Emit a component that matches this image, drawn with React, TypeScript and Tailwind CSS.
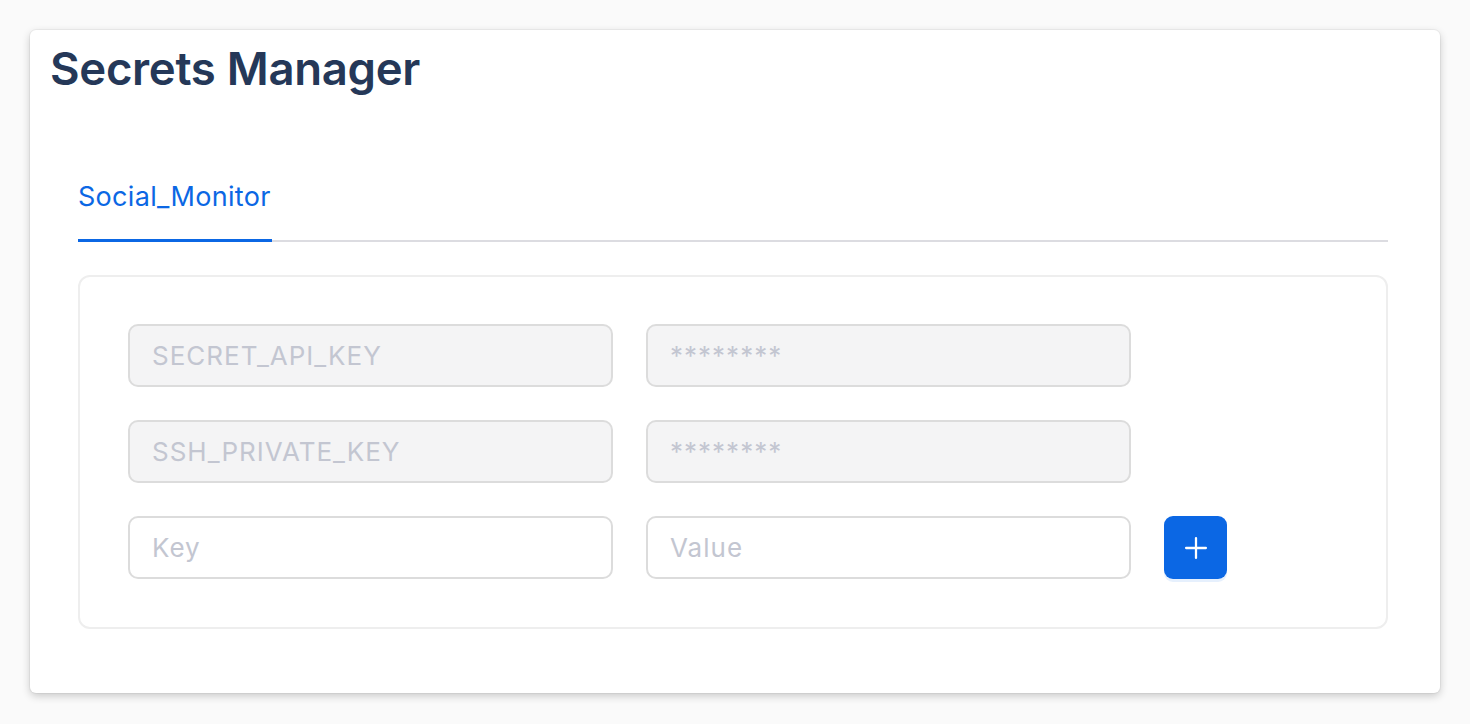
import { Plus } from "lucide-react";

const rows = [
  { key: "SECRET_API_KEY", value: "********" },
  { key: "SSH_PRIVATE_KEY", value: "********" },
];

function Field({ text, disabled }: { text: string; disabled?: boolean }) {
  return (
    <div
      className={`w-[485px] h-[63px] rounded-[10px] border-2 border-[#dcdcdc] flex items-center pl-[22px] text-[26px] tracking-[1px] text-[#c3c6d1] ${
        disabled ? "bg-[#f4f4f5]" : "bg-white"
      }`}
    >
      {text}
    </div>
  );
}

export default function App() {
  return (
    <div
      className="min-h-screen bg-[#fafafa] p-[30px]"
      style={{ fontFamily: "Inter, 'Noto Sans', sans-serif" }}
    >
      <div className="w-[1410px] h-[663px] bg-white rounded-md shadow-[0_3px_8px_rgba(0,0,0,0.2),0_0_0_1px_rgba(0,0,0,0.04)] pt-[9px]">
        <h1 className="pl-[20px] text-[45.5px] leading-[60px] font-semibold text-[#253858] tracking-[-0.3px]">
          Secrets Manager
        </h1>
        <div className="ml-[48px] mr-[52px] mt-[80px]">
          <div className="flex border-b-2 border-[#dcdce1]">
            <div className="text-[27px] leading-[32px] tracking-[0.3px] text-[#0b67e4] pt-[2px] pb-[26px] border-b-[3px] border-[#0b67e4] -mb-[2px] pr-[1px]">
              Social_Monitor
            </div>
          </div>
          <div className="mt-[33px] border-2 border-[#eeeeee] rounded-[12px] px-[48px] pt-[47px] pb-[48px] flex flex-col gap-[33px]">
            {rows.map((r) => (
              <div key={r.key} className="flex gap-[33px]">
                <Field text={r.key} disabled />
                <Field text={r.value} disabled />
              </div>
            ))}
            <div className="flex gap-[33px]">
              <Field text="Key" />
              <Field text="Value" />
              <button className="w-[63px] h-[63px] rounded-[9px] bg-[#0b67e4] flex items-center justify-center shadow-[0_3px_0_#e6f0fd]">
                <Plus className="w-[34px] h-[34px] text-white" strokeWidth={1.6} />
              </button>
            </div>
          </div>
        </div>
      </div>
    </div>
  );
}
